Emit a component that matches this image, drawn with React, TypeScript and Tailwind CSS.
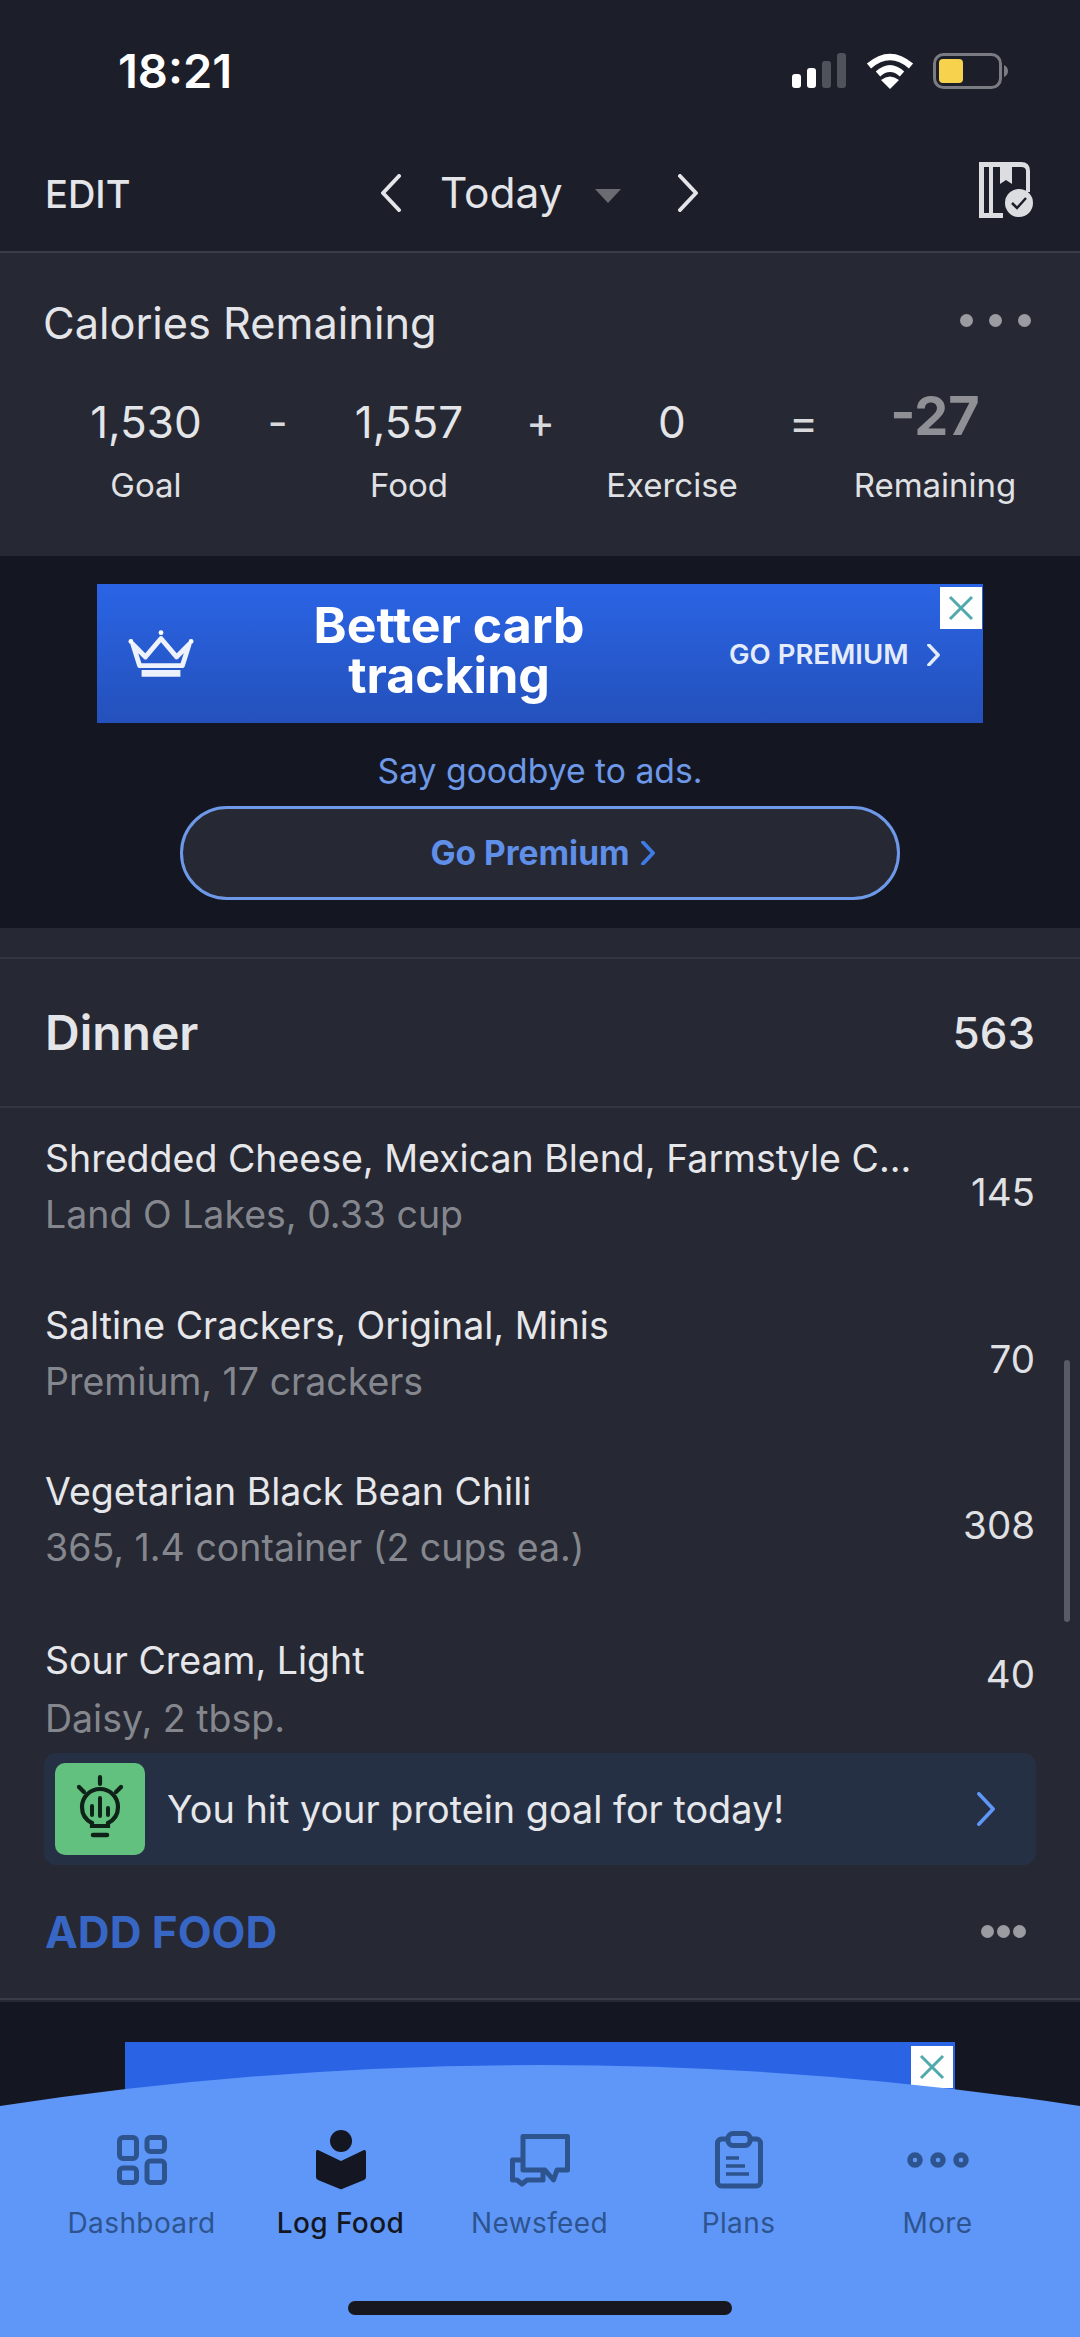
const font = { fontFamily: "Inter, 'Liberation Sans', sans-serif" };

const foods = [
  { name: "Shredded Cheese, Mexican Blend, Farmstyle C...", sub: "Land O Lakes, 0.33 cup", kcal: 145 },
  { name: "Saltine Crackers, Original, Minis", sub: "Premium, 17 crackers", kcal: 70 },
  { name: "Vegetarian Black Bean Chili", sub: "365, 1.4 container (2 cups ea.)", kcal: 308 },
];

const Chevron = ({ left = false, thick = false, className = "" }: { left?: boolean; thick?: boolean; className?: string }) => (
  <svg viewBox="0 0 22 38" className={className} fill="none" stroke="currentColor" strokeWidth={thick ? 6 : 4} strokeLinecap="round" strokeLinejoin="round">
    <path d={left ? "M19 2 L3 19 L19 36" : "M3 2 L19 19 L3 36"} />
  </svg>
);

const CloseBox = ({ className = "" }: { className?: string }) => (
  <div className={`flex items-center justify-center bg-white ${className}`}>
    <svg viewBox="0 0 28 28" className="h-7 w-7" stroke="#4fa9ad" strokeWidth="3" fill="none">
      <path d="M3 3 L25 25 M25 3 L3 25" />
    </svg>
  </div>
);

const StatusIcons = () => (
  <div className="flex items-start gap-[20px]">
    <svg width="54" height="36" viewBox="0 0 54 36">
      <rect x="0" y="21" width="9" height="14" rx="3" fill="#fff" />
      <rect x="15" y="15" width="9" height="20" rx="3" fill="#fff" />
      <rect x="30" y="8" width="9" height="27" rx="3" fill="#50525b" />
      <rect x="45" y="0" width="9" height="35" rx="3" fill="#50525b" />
    </svg>
    <svg width="48" height="36" viewBox="0 0 48 36" fill="none" stroke="#fff" strokeWidth="6.5">
      <path d="M3 13 Q24 -5 45 13" />
      <path d="M12 21 Q24 10 36 21" />
      <path d="M24 36 L15 27 Q24 20 33 27 Z" fill="#fff" stroke="none" />
    </svg>
    <svg width="76" height="36" viewBox="0 0 76 36" className="-ml-[1px]">
      <rect x="1.5" y="1.5" width="66" height="33" rx="9" fill="none" stroke="#7b7c82" strokeWidth="3" />
      <rect x="6" y="6" width="24" height="24" rx="4" fill="#f7d24c" />
      <path d="M71 12 Q75 14 75 18 Q75 22 71 24 Z" fill="#7b7c82" />
    </svg>
  </div>
);

const DiaryIcon = () => (
  <svg width="54" height="56" viewBox="0 0 54 56">
    <path d="M0 0 H42 Q51 0 51 9 V30 H47 V9 Q47 5 42 5 H5 V51 H24 V56 H0 Z" fill="#dcdde0" />
    <rect x="10" y="5" width="4" height="46" fill="#dcdde0" />
    <path d="M21 3 H33 V22 L27 18 L21 22 Z" fill="#dcdde0" />
    <circle cx="40" cy="41" r="14" fill="#dcdde0" />
    <path d="M33 41 L38 46 L47 36" fill="none" stroke="#1c1e29" strokeWidth="2.5" />
  </svg>
);

const Crown = () => (
  <svg width="66" height="50" viewBox="0 0 68 50" fill="none" stroke="#eef2fc" strokeWidth="5">
    <path d="M5 15 L18 28 L34 9 L50 28 L63 15 L56 37 H12 Z" strokeLinejoin="round" />
    <path d="M14 45 H54" strokeWidth="7" />
    <circle cx="34" cy="3" r="2.5" fill="#fff" stroke="none" />
    <circle cx="3" cy="12" r="2.5" fill="#fff" stroke="none" />
    <circle cx="65" cy="12" r="2.5" fill="#fff" stroke="none" />
  </svg>
);

const BulbIcon = () => (
  <svg viewBox="0 0 90 92" className="h-[92px] w-[90px]" fill="none" stroke="#0f2218" strokeWidth="4.2" strokeLinecap="round">
    <path d="M45 14 V21" />
    <path d="M24 24 L29 29" />
    <path d="M66 24 L61 29" />
    <path d="M37 63 V60 C29 56 27 50 27 44 A18 18 0 0 1 63 44 C63 50 61 56 53 60 V63 Z" />
    <path d="M38 72 H52" strokeWidth="4.5" />
    <path d="M45 35 V53 M37 43 V52 M53 45 V52" strokeWidth="4" />
  </svg>
);

const DashboardIcon = () => (
  <svg width="50" height="50" viewBox="0 0 50 50" fill="none" stroke="currentColor" strokeWidth="5">
    <rect x="2.5" y="2.5" width="17" height="21" rx="3.5" />
    <rect x="30" y="2.5" width="17.5" height="14" rx="3.5" />
    <rect x="2.5" y="33" width="17" height="14.5" rx="3.5" />
    <rect x="30" y="26" width="17.5" height="21.5" rx="3.5" />
  </svg>
);

const LogFoodIcon = () => (
  <svg width="50" height="60" viewBox="0 0 50 60" fill="currentColor">
    <circle cx="25" cy="11" r="11" />
    <path d="M2 20 L25 31 L48 20 Q50 19.5 50 22 V47 Q50 49 48 50 L26 59 Q25 59.5 24 59 L2 50 Q0 49 0 47 V22 Q0 19.5 2 20 Z" />
  </svg>
);

const NewsfeedIcon = () => (
  <svg width="60" height="53" viewBox="0 0 60 53" fill="none" stroke="currentColor" strokeWidth="5" strokeLinejoin="round">
    <path d="M13 2.5 H57.5 V36 H47 L43.5 46 L35 36 H13 Z" />
    <path d="M13 26 H2.5 V46 H7 L12 50 L17 46 H33 V36" />
  </svg>
);

const PlansIcon = () => (
  <svg width="48" height="58" viewBox="0 0 48 58" fill="none" stroke="currentColor" strokeWidth="5">
    <rect x="2.5" y="8" width="43" height="47" rx="4" />
    <rect x="13" y="2.5" width="22" height="12" rx="5" fill="#5f97f8" />
    <path d="M11 27 H24 M11 35 H30 M11 43 H34" strokeWidth="3.5" />
  </svg>
);

const MoreIcon = () => (
  <svg width="62" height="16" viewBox="0 0 62 16" fill="none" stroke="currentColor" strokeWidth="5.5">
    <circle cx="8" cy="8" r="5" />
    <circle cx="31" cy="8" r="5" />
    <circle cx="54" cy="8" r="5" />
  </svg>
);

const tabs = [
  { label: "Dashboard", icon: <DashboardIcon /> },
  { label: "Log Food", icon: <LogFoodIcon />, active: true },
  { label: "Newsfeed", icon: <NewsfeedIcon /> },
  { label: "Plans", icon: <PlansIcon /> },
  { label: "More", icon: <MoreIcon /> },
];

const Stat = ({ value, label, bold = false }: { value: string; label: string; bold?: boolean }) => (
  <div className="flex w-[200px] flex-col items-center">
    <div className="flex h-[62px] items-center">
      {bold ? (
        <span className="-mt-[12px] text-[54px] leading-none font-bold text-[#8f9095]">{value}</span>
      ) : (
        <span className="text-[44px] leading-none text-[#e4e5e8]">{value}</span>
      )}
    </div>
    <span className="mt-[2px] text-[33px] leading-[60px] text-[#e0e1e4]">{label}</span>
  </div>
);

const Op = ({ children }: { children: string }) => (
  <div className="flex h-[62px] w-[63px] items-center justify-center text-[44px] leading-none text-[#d8d9dc]">{children}</div>
);

const FoodRow = ({ name, sub, kcal }: { name: string; sub: string; kcal: number }) => (
  <div className="flex h-[166.5px] items-center justify-between px-[45px]">
    <div className="-mt-[8px] flex flex-col">
      <span className="text-[37.5px] leading-[56px] text-[#e6e7ea]">{name}</span>
      <span className="text-[37.5px] leading-[56px] text-[#85878e]">{sub}</span>
    </div>
    <span className="mt-[2px] text-[38.5px] leading-none text-[#e0e1e4]">{kcal}</span>
  </div>
);

export default function App() {
  return (
    <div style={font} className="relative flex h-[2337px] w-[1080px] flex-col overflow-hidden bg-[#141722]">
      <header className="h-[253px] shrink-0 border-b-2 border-[#3a3c47] bg-[#1c1e29]">
        <div className="flex h-[142px] items-start justify-between pt-[53px] pr-[71px] pl-[118px]">
          <span className="text-[47px] leading-[36px] font-semibold text-white">18:21</span>
          <StatusIcons />
        </div>
        <div className="relative flex h-[90px] items-start justify-between pr-[47px] pl-[45px]">
          <span className="mt-[32px] text-[38px] leading-[40px] font-medium text-[#e4e5e8]">EDIT</span>
          <div className="absolute top-[28px] left-[380px] flex items-center text-[#e4e5e8]">
            <Chevron left className="h-[38px] w-[22px]" />
            <span className="ml-[38px] text-[42.5px] leading-[46px]">Today</span>
            <div className="mt-[6px] ml-[32px] h-0 w-0 border-x-[13px] border-t-[14px] border-x-transparent border-t-[#6b6c72]" />
            <Chevron className="ml-[56px] h-[38px] w-[22px]" />
          </div>
          <div className="mt-[20px]">
            <DiaryIcon />
          </div>
        </div>
      </header>

      <section className="h-[303px] shrink-0 bg-[#262833]">
        <div className="flex items-center justify-between pt-[44px] pr-[49px] pl-[43px]">
          <span className="text-[43.3px] leading-[52px] text-[#e4e5e8]">Calories Remaining</span>
          <div className="-mt-[6px] flex gap-[16px]">
            <div className="h-[13px] w-[13px] rounded-full bg-[#9b9ca1]" />
            <div className="h-[13px] w-[13px] rounded-full bg-[#9b9ca1]" />
            <div className="h-[13px] w-[13px] rounded-full bg-[#9b9ca1]" />
          </div>
        </div>
        <div className="mt-[42px] flex pl-[46px]">
          <Stat value="1,530" label="Goal" />
          <Op>-</Op>
          <Stat value="1,557" label="Food" />
          <Op>+</Op>
          <Stat value="0" label="Exercise" />
          <Op>=</Op>
          <Stat value="-27" label="Remaining" bold />
        </div>
      </section>

      <section className="flex h-[372px] shrink-0 flex-col items-center">
        <div className="relative mt-[28px] flex h-[139px] w-[886px] items-center bg-gradient-to-b from-[#2a64e5] to-[#2451bb]">
          <div className="ml-[31px]">
            <Crown />
          </div>
          <div className="-mt-[7px] ml-[85px] w-[340px] text-center text-[50px] leading-[50px] font-bold text-white">
            Better carb
            <br />
            tracking
          </div>
          <div className="mt-[2px] ml-[110px] flex items-center text-[27.5px] font-semibold whitespace-nowrap text-[#e4ebfa]">
            GO PREMIUM
            <Chevron thick className="ml-[18px] h-[22px] w-[13px]" />
          </div>
          <CloseBox className="absolute top-[3px] right-[1px] h-[42px] w-[42px]" />
        </div>
        <p className="mt-[29px] text-[33.7px] leading-[38px] text-[#6d99e8]">Say goodbye to ads.</p>
        <div className="mt-[16px] flex h-[94px] w-[720px] items-center justify-center rounded-full border-[3px] border-[#6d99e8] bg-[#262833] pl-[5px]">
          <span className="text-[33.5px] font-bold text-[#5f8fe8]">Go Premium</span>
          <Chevron thick className="ml-[11px] h-[24px] w-[14px] text-[#3f7ae6]" />
        </div>
      </section>

      <section className="h-[1074px] shrink-0 bg-[#262833]">
        <div className="h-[31px] border-b-2 border-[#33353f]" />
        <div className="flex h-[149px] items-center justify-between border-b-2 border-[#33353f] px-[45px]">
          <span className="text-[48px] font-semibold text-[#e4e5e8]">Dinner</span>
          <span className="text-[44px] font-medium text-[#e4e5e8]">563</span>
        </div>
        {foods.map((f) => (
          <FoodRow key={f.name} {...f} />
        ))}
        <div className="flex h-[145px] items-start justify-between px-[45px]">
          <div className="flex flex-col pt-[24px]">
            <span className="text-[37.5px] leading-[58px] text-[#e6e7ea]">Sour Cream, Light</span>
            <span className="text-[37.5px] leading-[58px] text-[#85878e]">Daisy, 2 tbsp.</span>
          </div>
          <span className="mt-[47px] text-[38.5px] leading-none text-[#e0e1e4]">40</span>
        </div>
        <div className="mx-[44px] flex h-[112px] items-center rounded-[12px] bg-[#263045] pr-[40px] pl-[11px]">
          <div className="flex h-[92px] w-[90px] shrink-0 items-center justify-center rounded-[10px] bg-[#63c17f]">
            <BulbIcon />
          </div>
          <span className="mt-[2px] ml-[22px] flex-1 text-[37.8px] text-[#e6e7ea]">You hit your protein goal for today!</span>
          <Chevron className="h-[34px] w-[20px] text-[#5f97f8]" />
        </div>
        <div className="flex h-[135px] items-center justify-between border-b-2 border-[#3a3c47] pr-[54px] pl-[45px]">
          <span className="mt-[2px] text-[44px] font-bold text-[#3866c4]">ADD FOOD</span>
          <div className="flex gap-[3px]">
            <div className="h-[13px] w-[13px] rounded-full bg-[#9b9ca1]" />
            <div className="h-[13px] w-[13px] rounded-full bg-[#9b9ca1]" />
            <div className="h-[13px] w-[13px] rounded-full bg-[#9b9ca1]" />
          </div>
        </div>
      </section>

      <div className="relative mx-auto mt-[40px] h-[120px] w-[830px] shrink-0 bg-[#2a64e5]">
        <CloseBox className="absolute top-[4px] right-[2px] h-[42px] w-[42px]" />
      </div>

      <div className="absolute top-[1360px] right-[10px] h-[262px] w-[6px] rounded-full bg-[#5a5c65]" />

      <nav className="absolute inset-x-0 bottom-0 h-[272px]">
        <svg className="absolute inset-0" width="1080" height="272" viewBox="0 0 1080 272">
          <path d="M0 41 Q540 -41 1080 41 V272 H0 Z" fill="#5f97f8" />
        </svg>
        <div className="relative flex px-[42px] pt-[65px]">
          {tabs.map((t) => (
            <div key={t.label} className={`flex w-[199px] flex-col items-center ${t.active ? "text-[#141722]" : "text-[#2e548f]"}`}>
              <div className="flex h-[60px] items-center justify-center">{t.icon}</div>
              <span className={`mt-[15px] text-[28px] leading-[36px] tracking-[0.4px] ${t.active ? "font-medium" : ""}`}>{t.label}</span>
            </div>
          ))}
        </div>
        <div className="absolute bottom-[22px] left-[348px] h-[14px] w-[384px] rounded-full bg-[#17181f]" />
      </nav>
    </div>
  );
}
